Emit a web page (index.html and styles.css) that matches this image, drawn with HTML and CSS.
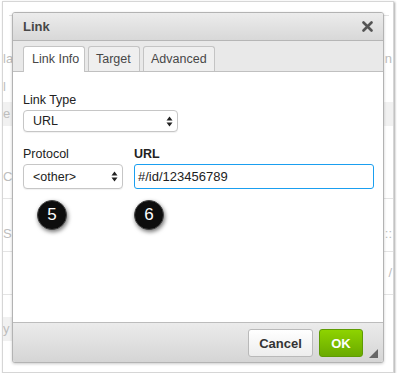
FILE: index.html
```html
<!DOCTYPE html>
<html lang="en">
<head>
  <meta charset="UTF-8" />
  <title>Link dialog</title>
  <link rel="stylesheet" href="styles.css">
</head>
<body>

  <div class="frame">
    <!-- faded page behind the dialog -->
    <div class="page">
      <div class="page-rule"></div>
      <div class="page-row r1"><span>la</span><span>n</span></div>
      <div class="page-row r2"><span>l</span></div>
      <div class="page-box b1"><span>e</span></div>
      <div class="page-row r3"><span>C</span></div>
      <div class="page-line l1"></div>
      <div class="page-row r4"><span>S</span><span>::</span></div>
      <div class="page-line l2"></div>
      <div class="page-row r5"><span></span><span>/</span></div>
      <div class="page-line l3"></div>
      <div class="page-box b2"><span>y</span></div>
    </div>

    <div class="dialog">
      <div class="dialog-title">
        <span>Link</span>
        <svg class="close" width="11" height="11" viewBox="0 0 11 11">
          <path d="M1.5 1.5 L9.5 9.5 M9.5 1.5 L1.5 9.5" stroke="#555" stroke-width="2.6" stroke-linecap="round"/>
        </svg>
      </div>

      <div class="tabs">
        <div class="tab active">Link Info</div>
        <div class="tab">Target</div>
        <div class="tab">Advanced</div>
      </div>

      <div class="dialog-body">
        <div class="field">
          <span class="label">Link Type</span>
          <div class="select wide">
            <span>URL</span>
            <svg width="7" height="11" viewBox="0 0 7 11"><path d="M3.5 0.5 L6.5 4.5 H0.5 Z M3.5 10.5 L6.5 6.5 H0.5 Z" fill="#222"/></svg>
          </div>
        </div>

        <div class="field-row">
          <div class="field">
            <span class="label">Protocol</span>
            <div class="select narrow">
              <span>&lt;other&gt;</span>
              <svg width="7" height="11" viewBox="0 0 7 11"><path d="M3.5 0.5 L6.5 4.5 H0.5 Z M3.5 10.5 L6.5 6.5 H0.5 Z" fill="#222"/></svg>
            </div>
          </div>
          <div class="field grow">
            <span class="label bold">URL</span>
            <div class="input focus">#/id/123456789</div>
          </div>
        </div>

        <div class="steps">
          <div class="step s5">5</div>
          <div class="step s6">6</div>
        </div>
      </div>

      <div class="dialog-footer">
        <button class="btn cancel">Cancel</button>
        <button class="btn ok">OK</button>
        <svg class="grip" width="9" height="9" viewBox="0 0 9 9"><path d="M9 0 V9 H0 Z" fill="#666"/></svg>
      </div>
    </div>
  </div>

</body>
</html>
```

FILE: styles.css
```css
:root {
  --text: #222;
  --muted: #474747;
  --border: #b8b8b8;
  --focus: #1a9ff0;
}

body {
  margin: 0;
  background: #fff;
  font-family: 'Liberation Sans', Arial, sans-serif;
  color: var(--text);
}

.frame {
  position: relative;
  margin: 1px 0 0 2px;
  width: 390px;
  height: 370px;
  border: 1px solid #d6d6d6;
  box-shadow: 1px 1px 2px rgba(0, 0, 0, 0.35);
  background: #fff;
  overflow: hidden;
}

/* background page, only edges show */
.page {
  display: flex;
  flex-direction: column;
  color: #bdbdbd;
  font-size: 13px;
}

.page-rule {
  margin: 13px 4px 0 6px;
  border-top: 1px solid #e3e3e3;
}

.page-row {
  display: flex;
  justify-content: space-between;
  padding: 0 0 0 0;
  height: 14px;
  line-height: 14px;
}

.page-row span:last-child { margin-right: 1px; }

.r1 { margin-top: 36px; }
.r2 { margin-top: 14px; }
.r3 { margin-top: 44px; }
.r4 { margin-top: 28px; }
.r5 { margin-top: 14px; }

.page-box {
  height: 24px;
  margin-right: 0;
  background: #f1f1f1;
  line-height: 24px;
}

.b1 { margin-top: 8px; }
.b2 { margin-top: 22px; width: 12px; }

.page-line {
  border-top: 1px solid #e4e4e4;
}

.l1 { margin-top: 14px; }
.l2 { margin-top: 10px; }
.l3 { margin-top: 14px; }

/* dialog */
.dialog {
  position: absolute;
  left: 9px;
  top: 10px;
  width: 370px;
  height: 349px;
  border: 1px solid #b3b3b3;
  border-radius: 3px;
  background: #fff;
  box-shadow: 0 1px 3px rgba(0, 0, 0, 0.2);
  display: flex;
  flex-direction: column;
  overflow: hidden;
}

.dialog-title {
  height: 27px;
  display: flex;
  justify-content: space-between;
  align-items: center;
  padding: 0 10px 0 10px;
  background: linear-gradient(#ececec, #d8d8d8);
  border-bottom: 1px solid #b6b6b6;
  font-size: 13px;
  font-weight: bold;
  color: var(--muted);
}

.close {
  margin-top: -1px;
}

.tabs {
  height: 25px;
  padding: 5px 0 0 10px;
  display: flex;
  gap: 3px;
  background: #e9e9e9;
  border-bottom: 1px solid #c0c0c0;
}

.tab {
  height: 25px;
  padding: 0 7px;
  box-sizing: border-box;
  border: 1px solid #c4c4c4;
  border-bottom: none;
  border-radius: 3px 3px 0 0;
  background: #efefef;
  font-size: 12.5px;
  line-height: 24px;
  color: var(--muted);
}

.tab.active {
  width: 62px;
  height: 26px;
  background: #fff;
  margin-bottom: -1px;
  padding: 0 0 0 8px;
}

.tab:nth-child(2) { width: 52px; }
.tab:nth-child(3) { width: 72px; }

.dialog-body {
  flex: 1;
  padding: 21px 10px 0 10px;
  display: flex;
  flex-direction: column;
}

.field {
  display: flex;
  flex-direction: column;
}

.label {
  font-size: 12.5px;
  line-height: 15px;
  margin-bottom: 2px;
  color: var(--text);
}

.label.bold { font-weight: bold; }

.select {
  box-sizing: border-box;
  display: flex;
  justify-content: space-between;
  align-items: center;
  border: 1px solid #c6c6c6;
  border-radius: 4px;
  background: #fff;
  box-shadow: 0 1px 1px rgba(0, 0, 0, 0.06);
  font-size: 12.5px;
  padding: 0 4px 0 9px;
}

.select.wide {
  width: 155px;
  height: 22px;
}

.select.narrow {
  width: 100px;
  height: 25px;
}

.field-row {
  margin-top: 15px;
  display: flex;
  gap: 11px;
}

.grow { flex: 1; }

.input {
  box-sizing: border-box;
  height: 25px;
  width: 240px;
  border: 1px solid var(--focus);
  border-radius: 3px;
  font-size: 13px;
  line-height: 23px;
  padding-left: 3px;
}

.steps {
  margin-top: 11px;
  display: flex;
}

.step {
  width: 30px;
  height: 30px;
  border-radius: 50%;
  background: #0d0d0d;
  border: 1px solid #444;
  box-sizing: border-box;
  color: #fff;
  font-size: 17px;
  line-height: 28px;
  text-align: center;
  box-shadow: 1px 2px 4px rgba(0, 0, 0, 0.55);
}

.s5 { margin-left: 14px; }
.s6 { margin-left: 67px; }

.dialog-footer {
  height: 39px;
  border-top: 1px solid #bcbcbc;
  background: linear-gradient(#ebebeb, #d5d5d5);
  display: flex;
  align-items: center;
  justify-content: flex-end;
  padding-right: 5px;
  gap: 6px;
  position: relative;
}

.btn {
  height: 28px;
  border-radius: 3px;
  font-family: 'Liberation Sans', Arial, sans-serif;
  font-size: 13px;
  font-weight: bold;
  padding: 0;
  margin-top: 1px;
}

.cancel {
  width: 65px;
  background: linear-gradient(#fff, #ededed);
  border: 1px solid #b9b9b9;
  color: #333;
}

.ok {
  width: 44px;
  margin-right: 15px;
  background: linear-gradient(#8ed300, #6aaa00);
  border: 1px solid #5e9b04;
  color: #fff;
}

.grip {
  position: absolute;
  right: 5px;
  bottom: 4px;
}
```
